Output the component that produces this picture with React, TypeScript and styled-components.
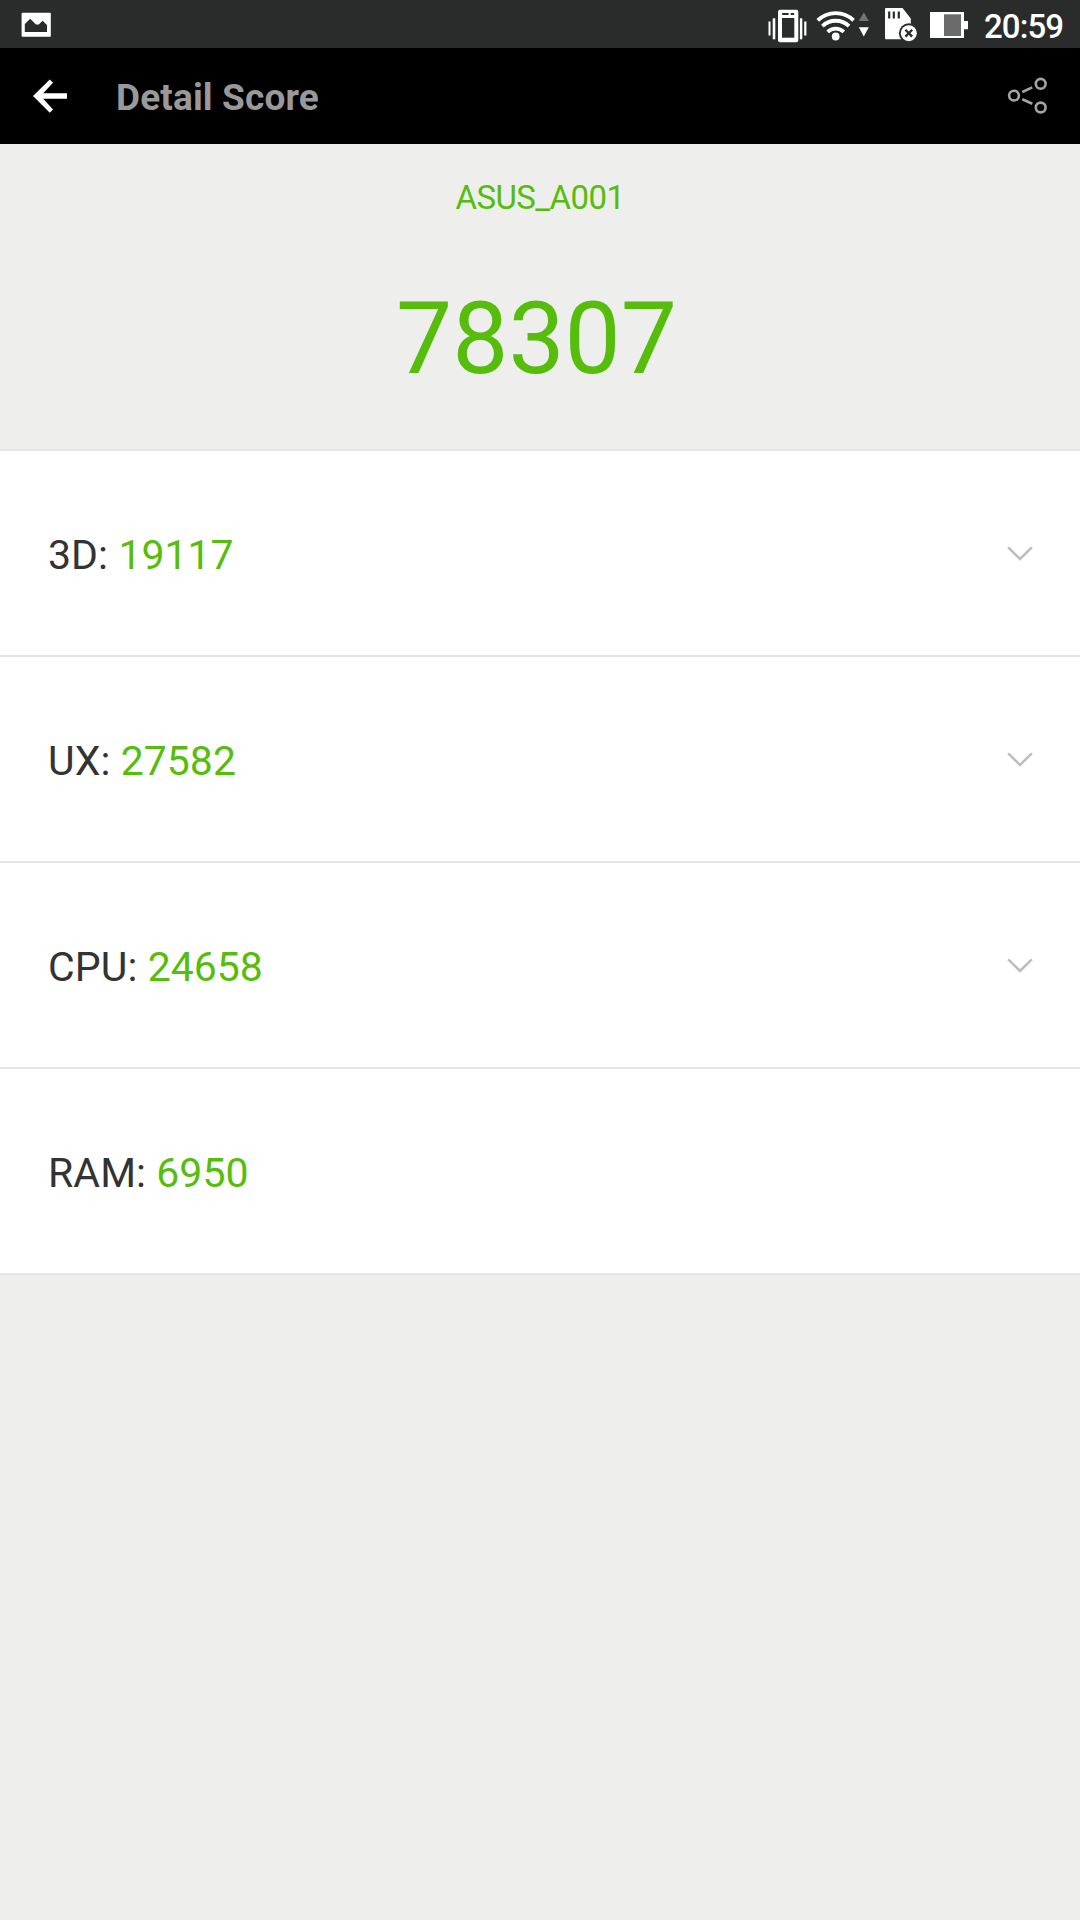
import React from "react";
import styled, { createGlobalStyle } from "styled-components";

const GREEN = "#56bd0d";

const GlobalStyle = createGlobalStyle`
  html, body { margin: 0; padding: 0; background: #eeeeec; }
  body { font-family: Roboto, "Liberation Sans", sans-serif; }
  svg { display: block; flex: none; }
`;

const Screen = styled.main`
  display: flex;
  flex-direction: column;
  width: 1080px;
  height: 1920px;
  overflow: hidden;
  background: #eeeeec;
`;

const StatusBar = styled.div`
  display: flex;
  justify-content: space-between;
  height: 48px;
  flex: none;
  background: #2a2c2b;
  color: #fff;
`;

const StatusGroup = styled.div`
  display: flex;
  align-items: center;
`;

const Clock = styled.time`
  width: 96px;
  padding-top: 5px;
  font-size: 33px;
  font-weight: 500;
  letter-spacing: -0.9px;
  line-height: 38px;
  white-space: nowrap;
`;

const AppBar = styled.header`
  display: flex;
  align-items: center;
  height: 96px;
  flex: none;
  box-sizing: border-box;
  padding: 0 31px 0 33px;
  background: #000;
`;

const IconButton = styled.button`
  padding: 0;
  border: 0;
  background: none;
`;

const Title = styled.h1`
  flex: 1;
  margin: 0;
  padding: 3px 0 0 49px;
  color: #999;
  font-size: 37px;
  font-weight: 700;
  letter-spacing: 0.14px;
  line-height: 44px;
`;

const Summary = styled.section`
  display: flex;
  flex-direction: column;
  align-items: center;
  height: 307px;
  flex: none;
  box-sizing: border-box;
  padding-top: 34px;
  border-bottom: 2px solid #e5e5e5;
  color: ${GREEN};
`;

const Device = styled.div`
  font-size: 33px;
  letter-spacing: -0.6px;
  line-height: 40px;
`;

const Total = styled.div`
  margin-top: 61px;
  padding-right: 7px;
  font-size: 100px;
  line-height: 120px;
`;

const ScoreList = styled.ul`
  margin: 0;
  padding: 0;
  list-style: none;
`;

const ScoreRow = styled.li`
  display: flex;
  align-items: center;
  justify-content: space-between;
  height: 206px;
  box-sizing: border-box;
  padding: 0 47px 0 48px;
  border-bottom: 2px solid #e5e5e5;
  background: #fff;
`;

const ScoreText = styled.div`
  padding-top: 4px;
  color: #333;
  font-size: 41px;
  letter-spacing: 0.08px;
  line-height: 48px;
  white-space: pre;
`;

const Score = styled.span`
  color: ${GREEN};
  letter-spacing: 0;
`;

const PictureIcon = () => (
  <svg width="72" height="48" viewBox="0 0 72 48">
    <path
      fill="#fff"
      fillRule="evenodd"
      d="M22.4 12.7H50a.8.8 0 0 1 .8.8v22.4a.8.8 0 0 1-.8.8H22.4a.8.8 0 0 1-.8-.8V13.5a.8.8 0 0 1 .8-.8ZM24.8 32H47v-7L42.6 20.7 38.8 24.4H36L30.2 18.8 24.8 24Z"
    />
  </svg>
);

const StatusIcons = () => (
  <svg width="218" height="48" viewBox="766 0 218 48">
    <g fill="#fff">
      <rect x="778" y="9.7" width="20.3" height="32.6" rx="2" />
      <rect x="768.5" y="21.5" width="2" height="14" />
      <rect x="772.7" y="18.3" width="2.6" height="21" />
      <rect x="799.9" y="18.3" width="2.4" height="21" />
      <rect x="804.2" y="21.5" width="2.2" height="14" />
    </g>
    <g fill="#2a2c2b">
      <rect x="782" y="18" width="12.3" height="19.7" />
      <rect x="782.2" y="13" width="6.4" height="2" />
      <rect x="790.7" y="13" width="3.4" height="2" />
    </g>
    <g fill="none" stroke="#fff" strokeWidth="3.8">
      <path d="M817.8 20.4a25.5 25.5 0 0 1 35.8 0" />
      <path d="M822.4 26.2a19 19 0 0 1 26.6 0" />
      <path d="M827.6 31.8a11.7 11.7 0 0 1 16.2 0" />
    </g>
    <circle cx="835.7" cy="36.5" r="3.9" fill="#fff" />
    <path d="M863.8 12.3 868.8 20.9H858.8Z" fill="#727372" />
    <path d="M863.8 36.4 858.8 27.2H868.8Z" fill="#fff" />
    <path
      fill="#fff"
      d="M886 8H902.5L910.8 18.5V39.3H886a1 1 0 0 1-1-1V9a1 1 0 0 1 1-1Z"
    />
    <path
      d="M889.2 11.4V18.4M893.8 11.4V18.4M898.8 11.4V18.4"
      stroke="#2a2c2b"
      strokeWidth="2.2"
    />
    <circle cx="908.8" cy="33.2" r="9.9" fill="#2a2c2b" />
    <circle cx="908.8" cy="33.2" r="8" fill="#fff" />
    <path
      d="M905.4 29.8l6.8 6.8M912.2 29.8l-6.8 6.8"
      stroke="#2a2c2b"
      strokeWidth="2.3"
    />
    <path fill="#fff" d="M930 12H964V21H968V29.3H964V38H930Z" />
    <rect x="944" y="14.3" width="17" height="21.7" fill="#6a6b6a" />
  </svg>
);

const BackIcon = () => (
  <svg width="34" height="34" viewBox="4 4 16 16">
    <path
      fill="#fff"
      d="M20 10.75H8.8L13.4 5.75 11.9 4.2 4 12 11.9 19.9 13.4 18.3 8.8 13.25H20Z"
    />
  </svg>
);

const ShareIcon = () => (
  <svg width="42" height="40" viewBox="1007 76 42 40">
    <g fill="none" stroke="#a4a4a4" strokeWidth="2.6">
      <circle cx="1014" cy="95.6" r="4.9" />
      <circle cx="1040.7" cy="83.8" r="4.9" />
      <circle cx="1040.7" cy="107.5" r="4.9" />
      <path d="M1022.3 92 1032.3 87.4M1022.3 99.2 1032.3 103.8" />
    </g>
  </svg>
);

const ChevronIcon = () => (
  <svg width="26" height="16" viewBox="1007 544.5 26 16">
    <path
      d="M1008.2 546.8 1020 558.5 1031.8 546.8"
      fill="none"
      stroke="#bdbdbd"
      strokeWidth="2.5"
    />
  </svg>
);

const scores = [
  { label: "3D", value: 19117, expandable: true },
  { label: "UX", value: 27582, expandable: true },
  { label: "CPU", value: 24658, expandable: true },
  { label: "RAM", value: 6950, expandable: false },
];

export default function App() {
  return (
    <Screen>
      <GlobalStyle />
      <StatusBar>
        <PictureIcon />
        <StatusGroup>
          <StatusIcons />
          <Clock>20:59</Clock>
        </StatusGroup>
      </StatusBar>
      <AppBar>
        <IconButton aria-label="Back">
          <BackIcon />
        </IconButton>
        <Title>Detail Score</Title>
        <IconButton aria-label="Share">
          <ShareIcon />
        </IconButton>
      </AppBar>
      <Summary>
        <Device>ASUS_A001</Device>
        <Total>78307</Total>
      </Summary>
      <ScoreList>
        {scores.map((s) => (
          <ScoreRow key={s.label}>
            <ScoreText>
              {s.label}: <Score>{s.value}</Score>
            </ScoreText>
            {s.expandable && <ChevronIcon />}
          </ScoreRow>
        ))}
      </ScoreList>
    </Screen>
  );
}
